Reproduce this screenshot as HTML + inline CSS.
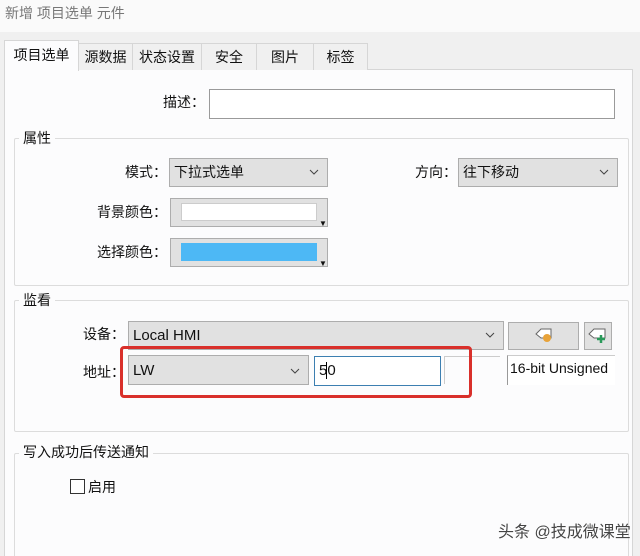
<!DOCTYPE html>
<html><head><meta charset="utf-8"><style>
*{box-sizing:border-box;margin:0;padding:0}
html,body{width:640px;height:556px;overflow:hidden}
body{position:relative;background:#f0f0f0;font-family:"Liberation Sans","Noto Sans CJK SC",sans-serif;font-size:14px;color:#111}
.a{position:absolute}
.t{position:absolute;white-space:nowrap;line-height:20px}
.tab{position:absolute;top:43px;height:27px;border:1px solid #d6d6d6;border-bottom:none;background:#f0f0f0;text-align:center;line-height:26px;font-size:14px}
.grp{position:absolute;border:1px solid #dcdcdc;border-radius:2px}
.gl{position:absolute;background:#fcfcfd;padding:0 4px;line-height:18px;font-size:14px}
.combo{position:absolute;background:#e1e1e1;border:1px solid #adadad;padding-left:4px;line-height:27px;font-size:14px}
.combo svg{position:absolute;right:8px;top:10px}
.inp{position:absolute;background:#fff;border:1px solid #7a7a7a}
</style></head><body>
<div class="a" style="left:0;top:0;width:640px;height:32px;background:#fafafa"></div>
<div class="t" style="left:5px;top:3px;color:#777;font-size:14px">新增 项目选单 元件</div>
<div class="a" style="left:4px;top:69px;width:629px;height:490px;background:#fcfcfd;border:1px solid #d6d6d6"></div>
<div class="tab" style="left:78px;width:55px">源数据</div>
<div class="tab" style="left:132px;width:70px">状态设置</div>
<div class="tab" style="left:201px;width:56px">安全</div>
<div class="tab" style="left:256px;width:58px">图片</div>
<div class="tab" style="left:313px;width:55px">标签</div>
<div class="tab" style="left:4px;top:40px;width:75px;height:31px;background:#fcfcfd;line-height:28px">项目选单</div>

<div class="t" style="left:163px;top:92px">描述：</div>
<div class="inp" style="left:209px;top:89px;width:406px;height:30px;border-color:#9a9a9a"></div>

<div class="grp" style="left:14px;top:138px;width:615px;height:148px"></div>
<div class="gl" style="left:19px;top:129px">属性</div>
<div class="t" style="left:125px;top:162px">模式：</div>
<div class="combo" style="left:169px;top:158px;width:159px;height:29px">下拉式选单<svg width="10" height="7"><path d="M1 1 L5 5 L9 1" fill="none" stroke="#444"/></svg></div>
<div class="t" style="left:415px;top:162px">方向：</div>
<div class="combo" style="left:458px;top:158px;width:160px;height:29px">往下移动<svg width="10" height="7"><path d="M1 1 L5 5 L9 1" fill="none" stroke="#444"/></svg></div>
<div class="t" style="left:97px;top:202px">背景颜色：</div>
<div class="combo" style="left:170px;top:198px;width:158px;height:29px"></div>
<div class="a" style="left:181px;top:203px;width:136px;height:18px;background:#fff;border:1px solid #ccc"></div>
<div class="a" style="left:319px;top:219px;font-size:8px">▼</div>
<div class="t" style="left:97px;top:242px">选择颜色：</div>
<div class="combo" style="left:170px;top:238px;width:158px;height:29px"></div>
<div class="a" style="left:181px;top:243px;width:136px;height:18px;background:#4db8f5"></div>
<div class="a" style="left:319px;top:259px;font-size:8px">▼</div>

<div class="grp" style="left:14px;top:300px;width:615px;height:132px"></div>
<div class="gl" style="left:19px;top:291px">监看</div>
<div class="t" style="left:83px;top:324px">设备：</div>
<div class="combo" style="left:128px;top:321px;width:376px;height:29px;line-height:28px;font-size:15px">Local HMI<svg width="10" height="7"><path d="M1 1 L5 5 L9 1" fill="none" stroke="#444"/></svg></div>
<div class="a" style="left:508px;top:322px;width:71px;height:28px;background:#e1e1e1;border:1px solid #adadad"></div>
<svg class="a" style="left:533px;top:326px" width="22" height="20"><path d="M3 8 L8 3 H18 V12 H8 Z" fill="#fff" stroke="#666"/><circle cx="14" cy="12" r="4" fill="#e8a33a"/></svg>
<div class="a" style="left:584px;top:322px;width:28px;height:28px;background:#e1e1e1;border:1px solid #adadad"></div>
<svg class="a" style="left:586px;top:326px" width="24" height="20"><path d="M3 8 L8 3 H19 V12 H8 Z" fill="#fff" stroke="#666"/><path d="M15 9 V17 M11 13 H19" stroke="#2a9a5a" stroke-width="2.5"/></svg>
<div class="t" style="left:83px;top:362px">地址：</div>
<div class="combo" style="left:128px;top:355px;width:181px;height:30px;line-height:30px;font-size:15px">LW<svg width="10" height="7" style="top:12px"><path d="M1 1 L5 5 L9 1" fill="none" stroke="#444"/></svg></div>
<div class="inp" style="left:314px;top:356px;width:127px;height:30px;border-color:#3c7fb1;padding-left:4px;line-height:27px;font-size:15px">5<span style="border-left:1px solid #000;margin-left:-1px">0</span></div>
<div class="a" style="left:444px;top:356px;width:56px;height:1px;background:#ccc"></div>
<div class="a" style="left:444px;top:356px;width:1px;height:28px;background:#ccc"></div>
<div class="a" style="left:507px;top:355px;width:108px;height:30px;background:#fff;border-left:1px solid #999;border-top:1px solid #ccc;padding-left:2px;line-height:24px;font-size:14px;overflow:hidden;white-space:nowrap">16-bit Unsigned</div>
<div class="a" style="left:120px;top:346px;width:352px;height:52px;border:3px solid #d9302b;border-radius:4px"></div>

<div class="grp" style="left:14px;top:453px;width:615px;height:110px"></div>
<div class="gl" style="left:19px;top:443px">写入成功后传送通知</div>
<div class="a" style="left:70px;top:479px;width:15px;height:15px;border:1px solid #333;background:#fff"></div>
<div class="t" style="left:88px;top:477px">启用</div>
<div class="t" style="left:498px;top:523px;font-size:16px;color:#444;text-shadow:0 0 2px #fff">头条 @技成微课堂</div>
</body></html>
